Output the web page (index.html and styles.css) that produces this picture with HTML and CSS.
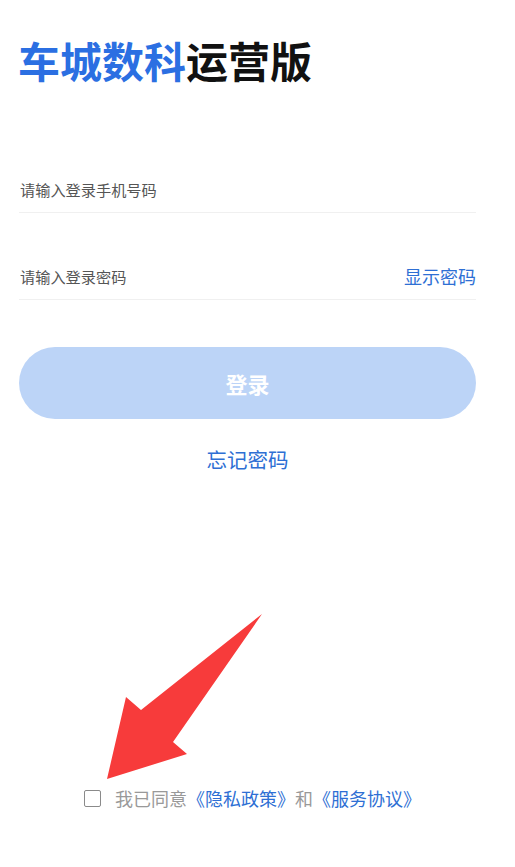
FILE: index.html
```html
<!DOCTYPE html>
<html lang="zh">
<head>
  <meta charset="UTF-8">
  <title>车城数科运营版 - 登录</title>
  <meta name="viewport" content="width=device-width, initial-scale=1.0">
  <link rel="stylesheet" href="styles.css">
</head>
<body>
  <div class="page">
    <h1 class="title"><span class="brand">车城数科</span>运营版</h1>

    <div class="field field-phone">
      <input type="text" placeholder="请输入登录手机号码">
    </div>
    <div class="field field-pwd">
      <input type="password" placeholder="请输入登录密码">
      <a href="#" class="show-pwd">显示密码</a>
    </div>

    <button class="login-btn" disabled>登录</button>
    <a href="#" class="forgot">忘记密码</a>

    <label class="agree">
      <span class="check"></span>
      <span>我已同意<a href="#">《隐私政策》</a>和<a href="#">《服务协议》</a></span>
    </label>
  </div>

  <!-- tutorial arrow pointing at the checkbox -->
  <svg class="hint-arrow" width="515" height="867" viewBox="0 0 515 867">
    <polygon points="107,779 126,697 141,710 262,614 173,742 187,754" fill="#f73b3b"/>
  </svg>
</body>
</html>
```

FILE: styles.css
```css
* {
  box-sizing: border-box;
}

body {
  margin: 0;
  background: #fff;
  font-family: "Noto Sans CJK SC", "Noto Sans", sans-serif;
}

.page {
  width: 457px;
  margin-left: 19px;
  min-height: 867px;
  display: flex;
  flex-direction: column;
}

.title {
  margin: 30px 0 0 -1px;
  height: 60px;
  line-height: 60px;
  font-size: 42px;
  font-weight: 700;
  color: #111;
}

.brand {
  color: #2b6fe2;
}

.field {
  height: 47px;
  display: flex;
  align-items: center;
  border-bottom: 1px solid #f0f0f0;
}

.field-phone {
  margin-top: 76px;
}

.field-pwd {
  margin-top: 40px;
}

.field input {
  flex: 1;
  border: none;
  outline: none;
  padding: 0 0 0 1px;
  font-family: inherit;
  font-size: 15.2px;
  color: #333;
  background: transparent;
}

.field input::placeholder {
  color: #555;
}

.show-pwd {
  font-size: 18px;
  color: #2e6fd4;
  text-decoration: none;
}

.login-btn {
  margin-top: 47px;
  height: 72px;
  border: none;
  border-radius: 36px;
  background: #bcd4f7;
  color: #fff;
  font-family: inherit;
  font-size: 22px;
  font-weight: 700;
}

.forgot {
  margin-top: 25px;
  align-self: center;
  line-height: 30px;
  font-size: 20.5px;
  color: #2e6fd4;
  text-decoration: none;
}

.agree {
  margin-top: auto;
  margin-bottom: 57px;
  margin-left: 65px;
  display: flex;
  align-items: center;
  line-height: 24px;
  font-size: 18px;
  color: #999;
}

.agree a {
  color: #2e6fd4;
  text-decoration: none;
}

.check {
  width: 17px;
  height: 17px;
  border: 1.5px solid #8a8a8a;
  border-radius: 2px;
  margin-right: 14px;
}

.hint-arrow {
  position: absolute;
  left: 0;
  top: 0;
  pointer-events: none;
}
```
